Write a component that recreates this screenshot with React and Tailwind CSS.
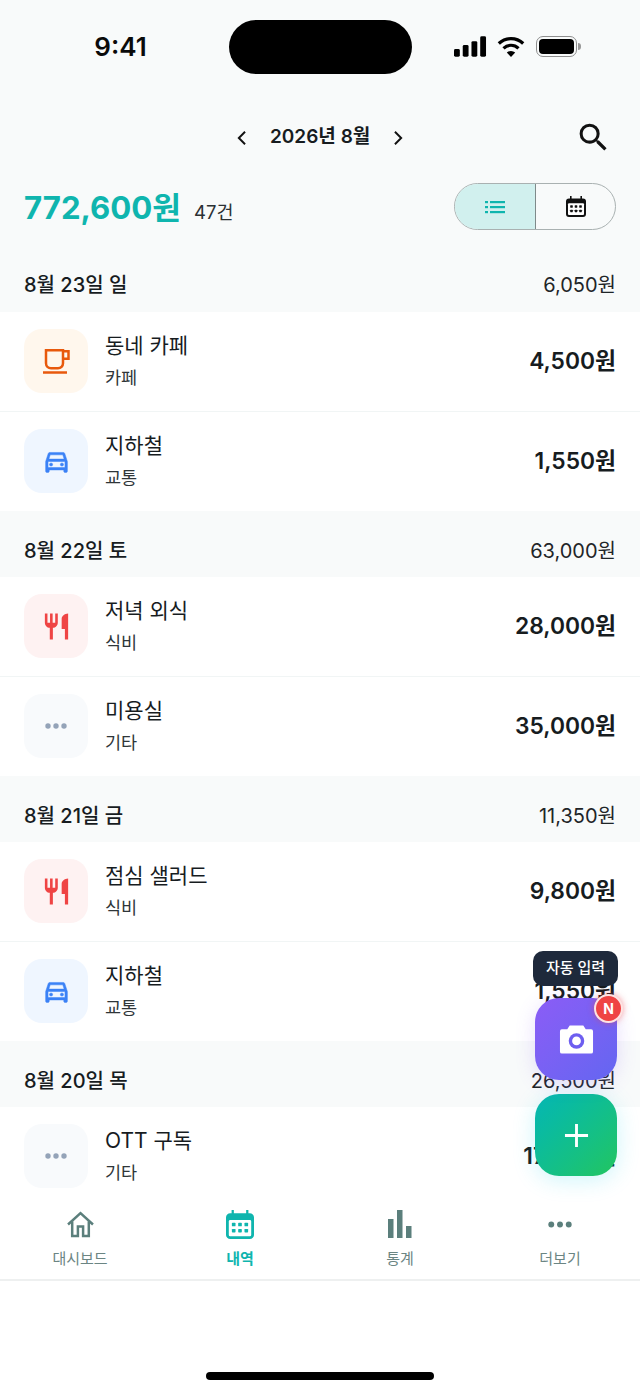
import React from "react";

const FONT = "font-['Inter','Noto_Sans_CJK_KR',sans-serif]";

const CalendarGlyph = ({ className }) => (
  <svg viewBox="2 1.5 20 21.5" preserveAspectRatio="none" className={className}>
    <path fill="currentColor" d="M6 1.500h1.600V4h8.800V1.500H18V4h1a3 3 0 0 1 3 3v13a3 3 0 0 1-3 3H5a3 3 0 0 1-3-3V7a3 3 0 0 1 3-3h1z" />
    <rect x="4" y="9" width="16" height="12" rx="1" fill="#ffffff" />
    {[7.5, 12, 16.5].map((x) =>
      [12.3, 16.8].map((y) => <rect key={x + "-" + y} x={x - 1.3} y={y - 1.3} width="2.600" height="2.600" rx="0.5" fill="currentColor" />)
    )}
  </svg>
);

const CupIcon = () => (
  <svg viewBox="0 0 27 25" className="w-[27px] h-[25px] text-[#e8590c] -mr-[1px]" fill="none" stroke="currentColor" strokeWidth="2.500">
    <path d="M3 1.300h17v13a5 5 0 0 1-5 5H8a5 5 0 0 1-5-5z" />
    <path d="M20 2.300h5.500v7.500H20" />
    <path d="M0 23.500h24" />
  </svg>
);

const CarIcon = () => (
  <svg viewBox="0 0 24 24" className="w-[29px] h-[29px] text-[#3b82f6]" fill="currentColor" stroke="currentColor" strokeWidth="0.400">
    <path d="M18.900 5.500A1.500 1.500 0 0 0 17.500 4.500h-11c-.7 0-1.200.4-1.400 1L3 12v8a1 1 0 0 0 1 1h1a1 1 0 0 0 1-1v-1h12v1a1 1 0 0 0 1 1h1a1 1 0 0 0 1-1v-8zM6.800 6.500h10.400l1.100 3.500H5.700zM19 17H5v-5h14z" />
    <circle cx="7.500" cy="14.500" r="1.300" />
    <circle cx="16.500" cy="14.500" r="1.300" />
  </svg>
);

const ForkIcon = () => (
  <svg viewBox="0 0 24 24" className="w-[31px] h-[31px] text-[#ef4444]" fill="currentColor">
    <path d="M11 9H9V2H7v7H5V2H3v7c0 2.100 1.700 3.800 3.800 4V22h2.400v-9c2.100-.2 3.800-1.900 3.800-4V2h-2zm5-3v8h2.500v8H21V2c-2.800 0-5 2.200-5 4z" />
  </svg>
);

const Dots = ({ className }) => (
  <svg viewBox="0 0 22 6" className={className} fill="currentColor">
    <circle cx="3" cy="3" r="2.700" />
    <circle cx="11" cy="3" r="2.700" />
    <circle cx="19" cy="3" r="2.700" />
  </svg>
);

const MoreIcon = () => <Dots className="w-[22px] h-[6px] text-[#94a3b8]" />;

const icons = {
  cafe: { bg: "bg-[#fff7ed]", icon: <CupIcon /> },
  car: { bg: "bg-[#eff6ff]", icon: <CarIcon /> },
  food: { bg: "bg-[#fef2f2]", icon: <ForkIcon /> },
  etc: { bg: "bg-[#f8fafc]", icon: <MoreIcon /> },
};

const sections = [
  {
    date: "8월 23일 일",
    total: "6,050원",
    rows: [
      { kind: "cafe", title: "동네 카페", sub: "카페", amount: "4,500원" },
      { kind: "car", title: "지하철", sub: "교통", amount: "1,550원" },
    ],
  },
  {
    date: "8월 22일 토",
    total: "63,000원",
    rows: [
      { kind: "food", title: "저녁 외식", sub: "식비", amount: "28,000원" },
      { kind: "etc", title: "미용실", sub: "기타", amount: "35,000원" },
    ],
  },
  {
    date: "8월 21일 금",
    total: "11,350원",
    rows: [
      { kind: "food", title: "점심 샐러드", sub: "식비", amount: "9,800원" },
      { kind: "car", title: "지하철", sub: "교통", amount: "1,550원" },
    ],
  },
  {
    date: "8월 20일 목",
    total: "26,500원",
    rows: [{ kind: "etc", title: "OTT 구독", sub: "기타", amount: "17,000원" }],
  },
];

const Row = ({ row, last }) => (
  <div className={`flex items-center justify-between bg-white px-6 py-[17.5px] ${last ? "" : "border-b border-[#f1f5f5]"}`}>
    <div className="flex items-center gap-[17px]">
      <div className={`w-16 h-16 rounded-[18px] flex items-center justify-center ${icons[row.kind].bg}`}>{icons[row.kind].icon}</div>
      <div className="flex flex-col gap-[5px] pb-[2px]">
        <div className="text-[21px] leading-[30px] text-[#171c1f]">{row.title}</div>
        <div className="text-[17.5px] leading-[24px] text-[#2f3639]">{row.sub}</div>
      </div>
    </div>
    <div className="text-[22.8px] font-semibold text-[#171c1f]">{row.amount}</div>
  </div>
);

const NavItem = ({ icon, label, active }) => (
  <div className="flex-1 flex flex-col items-center">
    <div className="h-[34px] flex items-center justify-center">{icon}</div>
    <div className={`mt-[7px] text-[15px] leading-[22px] ${active ? "font-semibold text-[#0fb5ae]" : "text-[#6b8583]"}`}>{label}</div>
  </div>
);

export default function App() {
  return (
    <div className={`relative w-[640px] h-[1391px] overflow-hidden flex flex-col bg-white ${FONT}`}>
      {/* status bar */}
      <div className="h-[94px] shrink-0 bg-[#f8fafa] flex items-start">
        <div className="w-[229px] pt-[30px] text-center text-[26px] leading-[34px] font-semibold text-[#0a0a0a] pl-[12px]">9:41</div>
        <div className="mt-[20px] w-[183px] h-[54px] rounded-[27px] bg-black" />
        <div className="flex items-center pt-[36px] pl-[42px] gap-[10px]">
          <svg viewBox="0 0 34 21" className="w-[33px] h-[21px]" fill="black">
            <rect x="0" y="13" width="6" height="8" rx="1.500" />
            <rect x="9" y="9" width="6" height="12" rx="1.500" />
            <rect x="18" y="5" width="6" height="16" rx="1.500" />
            <rect x="27" y="0" width="6" height="21" rx="1.500" />
          </svg>
          <svg viewBox="0 0 28 21" className="w-[28px] h-[21px]" fill="none" stroke="black" strokeWidth="3.200">
            <path d="M1.800 7.500a17.500 17.500 0 0 1 24.400 0" />
            <path d="M6.500 12.300a10.800 10.800 0 0 1 15 0" />
            <path d="M14 21l-4.200-4.400a6 6 0 0 1 8.400 0z" fill="black" stroke="none" />
          </svg>
          <div className="flex items-center ml-[1px]">
            <div className="w-[41px] h-[21px] rounded-[7px] border-[1.5px] border-[#8e8e8e] p-[2px]">
              <div className="w-full h-full rounded-[4px] bg-black" />
            </div>
            <div className="w-[3px] h-[7px] ml-[1px] rounded-r-sm bg-[#9a9a9a]" />
          </div>
        </div>
      </div>

      {/* month header */}
      <div className="relative h-[84px] shrink-0 bg-[#f8fafa] flex items-center justify-center gap-[23px] pt-[3px]">
        <svg viewBox="0 0 12 18" className="w-[11px] h-[16px]" fill="none" stroke="#111" strokeWidth="2.200"><path d="M10 2 3 9l7 7" /></svg>
        <span className="text-[19px] font-semibold text-[#171c1f] w-[100px] text-center whitespace-nowrap">2026년 8월</span>
        <svg viewBox="0 0 12 18" className="w-[11px] h-[16px]" fill="none" stroke="#111" strokeWidth="2.200"><path d="m2 2 7 7-7 7" /></svg>
        <svg viewBox="0 0 24 24" className="absolute right-[28px] top-[25px] w-[37px] h-[37px]" fill="#111">
          <path d="M15.500 14h-.79l-.28-.27A6.471 6.471 0 0 0 16 9.500 6.500 6.500 0 1 0 9.500 16c1.610 0 3.090-.59 4.230-1.570l.27.28v.79l5 4.990L20.490 19l-4.990-5zm-6 0C7.010 14 5 11.990 5 9.500S7.010 5 9.500 5 14 7.010 14 9.500 11.990 14 9.500 14z" />
        </svg>
      </div>

      {/* summary */}
      <div className="h-[80px] shrink-0 bg-[#f8fafa] flex items-start justify-between px-6 pt-[5px]">
        <div className="flex items-baseline gap-[13px]">
          <span className="text-[31.2px] leading-[50px] font-bold text-[#0fb5ae]">772,600원</span>
          <span className="text-[18.5px] text-[#2b3033]">47건</span>
        </div>
        <div className="flex w-[162px] h-[47px] rounded-full border border-[#a9b1b1] overflow-hidden">
          <div className="w-[81px] bg-[#d1f0ee] border-r border-[#7f8a8a] flex items-center justify-center">
            <svg viewBox="0 0 20 14" className="w-[20px] h-[14px]" fill="#0fb5ae">
              <rect x="0" y="1" width="3" height="2.200" /><rect x="5" y="1" width="15" height="2.200" />
              <rect x="0" y="6" width="3" height="2.200" /><rect x="5" y="6" width="15" height="2.200" />
              <rect x="0" y="11" width="3" height="2.200" /><rect x="5" y="11" width="15" height="2.200" />
            </svg>
          </div>
          <div className="flex-1 flex items-center justify-center">
            <CalendarGlyph className="w-[20px] h-[21px] text-[#111]" />
          </div>
        </div>
      </div>

      {/* list */}
      <div className="flex-1 overflow-hidden bg-white">
        {sections.map((s, i) => (
          <div key={s.date}>
            <div className={`bg-[#f8fafa] flex items-center justify-between px-6 ${i === 0 ? "h-[53.5px]" : "h-[66px] pt-[14px]"}`}>
              <span className="text-[20px] font-medium text-[#171c1f]">{s.date}</span>
              <span className="text-[20px] text-[#1f2528]">{s.total}</span>
            </div>
            {s.rows.map((r, j) => (
              <Row key={r.title + j} row={r} last={j === s.rows.length - 1} />
            ))}
          </div>
        ))}
      </div>

      {/* bottom nav */}
      <div className="h-[87px] shrink-0 bg-white border-b-2 border-[#eef0f0] flex pt-[13px]">
        <NavItem
          label="대시보드"
          icon={
            <svg viewBox="0 0 26 26" className="w-[27px] h-[27px] text-[#5b7f7c]" fill="none" stroke="currentColor" strokeWidth="2.400">
              <path d="M1 13 13 2l12 11" />
              <path d="M5 10v14h5.500v-9h5v9H21V10" />
            </svg>
          }
        />
        <NavItem active label="내역" icon={<CalendarGlyph className="w-[28px] h-[29px] text-[#0fb5ae]" />} />
        <NavItem
          label="통계"
          icon={
            <svg viewBox="0 0 24 28" className="w-[24px] h-[28px] text-[#5b7f7c]" fill="currentColor">
              <rect x="0" y="9" width="5.500" height="19" />
              <rect x="9" y="0" width="5.500" height="28" />
              <rect x="18" y="16" width="5.500" height="12" />
            </svg>
          }
        />
        <NavItem label="더보기" icon={<Dots className="w-[24px] h-[7px] text-[#5b7f7c]" />} />
      </div>

      {/* home indicator */}
      <div className="h-[110px] shrink-0 bg-white flex justify-center pt-[91px]">
        <div className="w-[228px] h-[8px] rounded-full bg-black" />
      </div>

      {/* floating buttons */}
      <div className="absolute right-[23px] top-[951px] flex flex-col items-end">
        <div className="mr-[-1px] w-[85px] h-[35px] rounded-[10px] bg-[#1e293b] text-white text-[15px] font-medium flex items-center justify-center">자동 입력</div>
        <div className="relative mt-[12px] w-[82px] h-[82px] rounded-[24px] bg-gradient-to-br from-[#8b5cf6] to-[#6366f1] shadow-[0_4px_20px_rgba(139,92,246,0.2)] flex items-center justify-center">
          <svg viewBox="0 0 36 30" className="w-[35px] h-[30px]">
            <path fill="white" d="M11 1h14l2.500 4H33a2 2 0 0 1 2 2v21a2 2 0 0 1-2 2H3a2 2 0 0 1-2-2V7a2 2 0 0 1 2-2h5.500z" />
            <circle cx="18" cy="17" r="8" fill="#6d5ef0" />
            <circle cx="18" cy="17" r="4.500" fill="white" />
          </svg>
          <div className="absolute -top-[4px] -right-[6px] w-[29px] h-[29px] rounded-full bg-[#ef4444] border-2 border-[#fde3e3] shadow-[0_0_6px_rgba(239,68,68,0.5)] text-white text-[14px] font-bold flex items-center justify-center">N</div>
        </div>
        <div className="mt-[14px] w-[82px] h-[82px] rounded-[24px] bg-gradient-to-br from-[#06b6b4] to-[#22c55e] shadow-[0_4px_22px_rgba(34,211,238,0.22)] flex items-center justify-center">
          <svg viewBox="0 0 26 26" className="w-[25px] h-[25px]" stroke="white" strokeWidth="3" fill="none">
            <path d="M13 1v24M1 13h24" />
          </svg>
        </div>
      </div>
    </div>
  );
}
